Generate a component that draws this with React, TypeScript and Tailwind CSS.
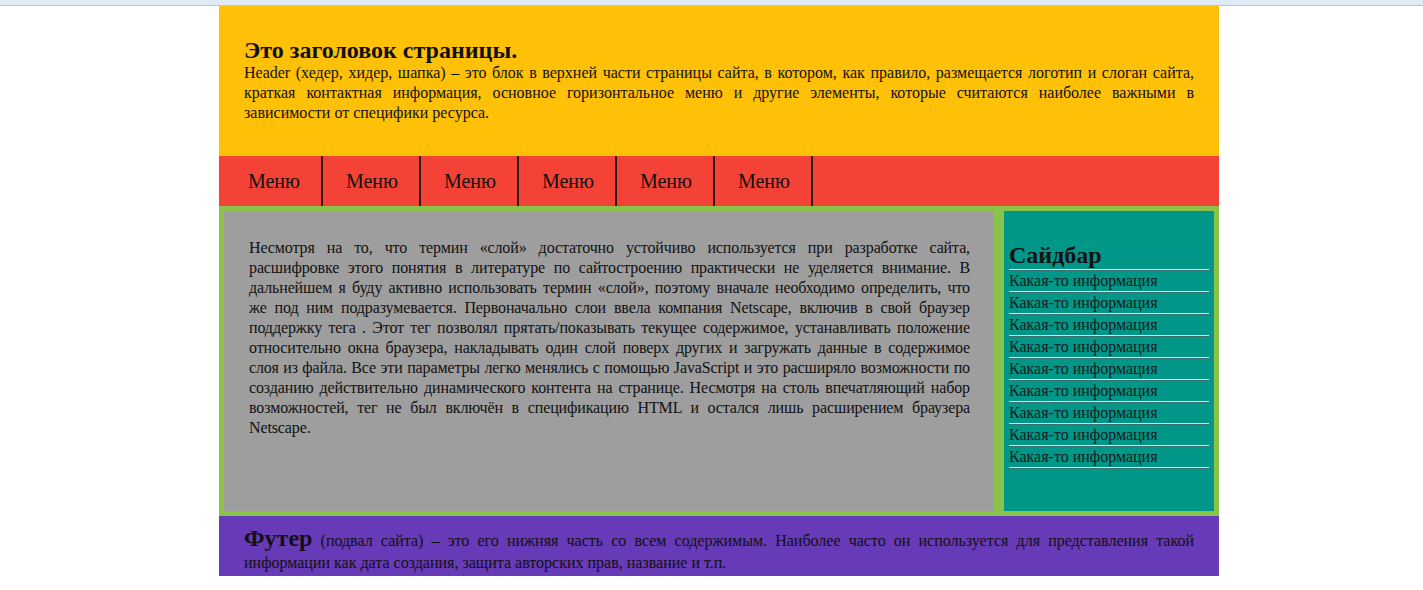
const menuItems = ['Меню', 'Меню', 'Меню', 'Меню', 'Меню', 'Меню']

const sidebarItems = Array.from({ length: 9 }, () => 'Какая-то информация')

// non-breaking spaces keep the line breaks the same as in the original
const mainText =
  'Несмотря на то, что термин «слой» достаточно устойчиво используется при разработке сайта, ' +
  'расшифровке этого понятия в литературе по сайтостроению практически не уделяется внимание. В ' +
  'дальнейшем я буду активно использовать термин «слой», поэтому вначале необходимо определить, что ' +
  'же\u00a0под ним подразумевается. Первоначально слои ввела компания Netscape, включив в свой браузер ' +
  'поддержку тега . Этот тег позволял прятать/показывать текущее содержимое, устанавливать положение ' +
  'относительно окна браузера, накладывать один слой поверх других и загружать данные в содержимое ' +
  'слоя\u00a0из файла. Все эти параметры легко менялись с помощью JavaScript и это расширяло возможности по ' +
  'созданию действительно динамического контента на странице. Несмотря на столь впечатляющий набор ' +
  'возможностей, тег не был включён в спецификацию HTML и остался лишь расширением браузера Netscape.'

export default function App() {
  return (
    <div className="min-h-screen bg-white text-[#111] font-['Liberation_Serif','Times_New_Roman',serif]">
      {/* browser strip */}
      <div className="h-[6px] bg-[#dfeaf7] border-b border-[#b4c6dc]" />

      <div className="ml-[219px] w-[1000px]">
        <header className="h-[150px] bg-[#ffc107] px-[25px] pt-[31px]">
          <h2 className="text-[24px] leading-[26px] font-bold">Это заголовок страницы.</h2>
          <p className="text-[16px] leading-[20px] text-justify">
            Header (хедер, хидер, шапка) – это блок в верхней части страницы сайта, в котором, как правило,
            размещается логотип и слоган сайта, краткая контактная информация, основное горизонтальное меню и
            другие элементы, которые считаются наиболее важными в зависимости от специфики ресурса.
          </p>
        </header>

        <nav className="h-[50px] bg-[#f44336] flex pl-[6px]">
          {menuItems.map((item, i) => (
            <div
              key={i}
              className="w-[98px] flex items-center justify-center border-r-2 border-[#2a1a1a] text-[20px] pl-[2px]"
            >
              {item}
            </div>
          ))}
        </nav>

        <div className="bg-[#8bc34a] p-[5px] flex gap-[10px]">
          <main className="w-[770px] h-[300px] bg-[#9e9e9e] pl-[25px] pr-[24px] pt-[27px]">
            <p className="text-[16px] leading-[20px] text-justify tracking-[-0.12px]">{mainText}</p>
          </main>

          <aside className="w-[210px] h-[300px] bg-[#009688] px-[5px] pt-[31px]">
            <h2 className="text-[24px] leading-[27px] font-bold border-b border-[#c4ece8] shadow-[0_1px_0_#3f6f6a] mb-px">
              Сайдбар
            </h2>
            <ul>
              {sidebarItems.map((item, i) => (
                <li
                  key={i}
                  className="text-[16px] leading-[20px] text-[#1a1a1a] border-b border-[#c4ece8] shadow-[0_1px_0_#3f6f6a] mb-px"
                >
                  {item}
                </li>
              ))}
            </ul>
          </aside>
        </div>

        <footer className="h-[60px] bg-[#673ab7] px-[25px] pt-[11px]">
          <p className="text-[16px] leading-[22px] text-justify">
            <span className="text-[24px] leading-[22px] font-bold">Футер</span> (подвал сайта) – это его нижняя
            часть со всем содержимым. Наиболее часто он используется для представления такой информации как
            дата создания, защита авторских прав, название и т.п.
          </p>
        </footer>
      </div>
    </div>
  )
}
